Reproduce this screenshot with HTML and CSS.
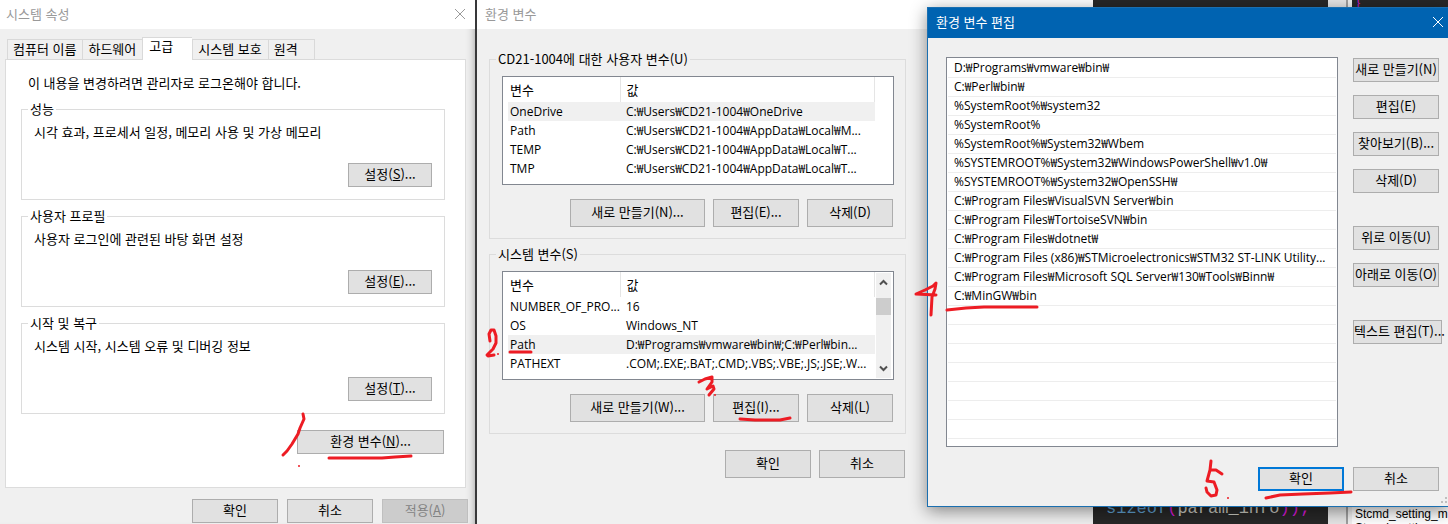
FILE: index.html
```html
<!DOCTYPE html>
<html lang="ko">

<head>
    <meta charset="UTF-8">
    <title>환경 변수 설정</title>
    <link rel="stylesheet" href="styles.css">
</head>

<body>
    <div class="desktop">
        <!-- 뒤쪽 편집기 -->
        <div class="editor">
            <div class="code">
                <code><span class="keyword">sizeof</span><span class="paren">(</span>param_info<span class="paren">));</span></code>
            </div>
            <div class="editor-scroll"></div>
            <div class="side-panel">
                <div class="side-code">}</div>
                <div class="side-list">
                    <div>Stcmd_setting_m</div>
                    <div>Stcmd_setting</div>
                </div>
            </div>
        </div>

        <!-- 시스템 속성 -->
        <section class="window system-window">
            <header class="titlebar">
                <span>시스템 속성</span>
                <button class="close" aria-label="닫기">
                    <svg width="12" height="12" viewBox="0 0 12 12"><path d="M1 1L11 11M11 1L1 11" /></svg>
                </button>
            </header>
            <div class="tabs">
                <button class="tab">컴퓨터 이름</button>
                <button class="tab">하드웨어</button>
                <button class="tab active">고급</button>
                <button class="tab">시스템 보호</button>
                <button class="tab">원격</button>
            </div>
            <div class="tab-panel">
                <p class="intro">이 내용을 변경하려면 관리자로 로그온해야 합니다.</p>
                <fieldset class="group">
                    <legend>성능</legend>
                    <p>시각 효과, 프로세서 일정, 메모리 사용 및 가상 메모리</p>
                    <button class="btn">설정(<u>S</u>)...</button>
                </fieldset>
                <fieldset class="group">
                    <legend>사용자 프로필</legend>
                    <p>사용자 로그인에 관련된 바탕 화면 설정</p>
                    <button class="btn">설정(<u>E</u>)...</button>
                </fieldset>
                <fieldset class="group">
                    <legend>시작 및 복구</legend>
                    <p>시스템 시작, 시스템 오류 및 디버깅 정보</p>
                    <button class="btn">설정(<u>T</u>)...</button>
                </fieldset>
                <button class="btn env-button">환경 변수(<u>N</u>)...</button>
            </div>
            <footer class="system-footer">
                <button class="btn">확인</button>
                <button class="btn">취소</button>
                <button class="btn" disabled>적용(<u>A</u>)</button>
            </footer>
        </section>

        <!-- 환경 변수 -->
        <section class="window env-window">
            <header class="titlebar"><span>환경 변수</span></header>
            <div class="env-body">
                <fieldset class="var-group">
                    <legend>CD21-1004에 대한 사용자 변수(U)</legend>
                    <div class="var-list">
                        <table>
                            <thead>
                                <tr><th class="name">변수</th><th>값</th></tr>
                            </thead>
                            <tbody>
                                <tr class="selected"><td>OneDrive</td><td>C:₩Users₩CD21-1004₩OneDrive</td></tr>
                                <tr><td>Path</td><td>C:₩Users₩CD21-1004₩AppData₩Local₩M...</td></tr>
                                <tr><td>TEMP</td><td>C:₩Users₩CD21-1004₩AppData₩Local₩T...</td></tr>
                                <tr><td>TMP</td><td>C:₩Users₩CD21-1004₩AppData₩Local₩T...</td></tr>
                            </tbody>
                        </table>
                    </div>
                    <div class="var-buttons">
                        <button class="btn wide">새로 만들기(N)...</button>
                        <button class="btn">편집(E)...</button>
                        <button class="btn">삭제(D)</button>
                    </div>
                </fieldset>
                <fieldset class="var-group">
                    <legend>시스템 변수(S)</legend>
                    <div class="var-list">
                        <table>
                            <thead>
                                <tr><th class="name">변수</th><th>값</th></tr>
                            </thead>
                            <tbody>
                                <tr><td>NUMBER_OF_PRO...</td><td>16</td></tr>
                                <tr><td>OS</td><td>Windows_NT</td></tr>
                                <tr class="selected"><td>Path</td><td>D:₩Programs₩vmware₩bin₩;C:₩Perl₩bin...</td></tr>
                                <tr><td>PATHEXT</td><td>.COM;.EXE;.BAT;.CMD;.VBS;.VBE;.JS;.JSE;.W...</td></tr>
                            </tbody>
                        </table>
                        <div class="scrollbar">
                            <svg width="9" height="7" viewBox="0 0 9 7"><path d="M1 5.5L4.5 2L8 5.5" /></svg>
                            <div class="thumb"></div>
                            <svg width="9" height="7" viewBox="0 0 9 7"><path d="M1 1.5L4.5 5L8 1.5" /></svg>
                        </div>
                    </div>
                    <div class="var-buttons">
                        <button class="btn wide">새로 만들기(W)...</button>
                        <button class="btn">편집(I)...</button>
                        <button class="btn">삭제(L)</button>
                    </div>
                </fieldset>
                <footer class="env-footer">
                    <button class="btn">확인</button>
                    <button class="btn">취소</button>
                </footer>
            </div>
        </section>

        <!-- 환경 변수 편집 -->
        <section class="window edit-window">
            <header class="titlebar">
                <span>환경 변수 편집</span>
                <button class="close" aria-label="닫기">
                    <svg width="12" height="12" viewBox="0 0 12 12"><path d="M1 1L11 11M11 1L1 11" /></svg>
                </button>
            </header>
            <div class="edit-body">
                <ul class="path-list">
                    <li>D:₩Programs₩vmware₩bin₩</li>
                    <li>C:₩Perl₩bin₩</li>
                    <li>%SystemRoot%₩system32</li>
                    <li>%SystemRoot%</li>
                    <li>%SystemRoot%₩System32₩Wbem</li>
                    <li>%SYSTEMROOT%₩System32₩WindowsPowerShell₩v1.0₩</li>
                    <li>%SYSTEMROOT%₩System32₩OpenSSH₩</li>
                    <li>C:₩Program Files₩VisualSVN Server₩bin</li>
                    <li>C:₩Program Files₩TortoiseSVN₩bin</li>
                    <li>C:₩Program Files₩dotnet₩</li>
                    <li>C:₩Program Files (x86)₩STMicroelectronics₩STM32 ST-LINK Utility...</li>
                    <li>C:₩Program Files₩Microsoft SQL Server₩130₩Tools₩Binn₩</li>
                    <li>C:₩MinGW₩bin</li>
                </ul>
                <div class="edit-buttons">
                    <div class="button-set">
                        <button class="btn">새로 만들기(N)</button>
                        <button class="btn">편집(E)</button>
                        <button class="btn">찾아보기(B)...</button>
                        <button class="btn">삭제(D)</button>
                    </div>
                    <div class="button-set">
                        <button class="btn">위로 이동(U)</button>
                        <button class="btn">아래로 이동(O)</button>
                    </div>
                    <div class="button-set">
                        <button class="btn text-edit">텍스트 편집(T)...</button>
                    </div>
                </div>
            </div>
            <footer class="edit-footer">
                <button class="btn default">확인</button>
                <button class="btn">취소</button>
            </footer>
            <svg class="grip" width="8" height="8" viewBox="0 0 8 8">
                <path d="M5 0h2v2h-2zM1 4h2v2h-2zM5 4h2v2h-2z" />
            </svg>
        </section>

        <!-- 순서 표시 -->
        <svg class="marks" width="1448" height="524" viewBox="0 0 1448 524">
            <path d="M303 414L304 419L300 428L298 434L292 444L287 451L283 455" />
            <path d="M329 458H382L395 457L411 456" />
            <path d="M490 341L489 334L491 330L494 330L496 336L496 343L493 349L487 355L488 356L494 355" />
            <path d="M510 352H531" />
            <path d="M699 382L705 379L712 377L712 382L707 389L713 386L714 389L709 395" />
            <path d="M740 419L755 420H780L790 418" />
            <path d="M936 295L916 294L925 290L933 286L936 283L935 289L932 297L931 315" />
            <path d="M947 310L966 308L984 307H1037" />
            <path d="M1211 461L1210 470L1207 481L1214 482L1217 490L1216 495L1211 496L1207 492L1206 488" />
            <path d="M1211 470L1216 470L1222 474" />
            <path d="M1266 498L1280 495L1303 494L1330 493L1351 492" />
            <g class="dots">
                <circle cx="299" cy="466" r="1" />
                <circle cx="498" cy="354" r="1" />
                <circle cx="715" cy="395" r="1" />
                <circle cx="1228" cy="498" r="1" />
            </g>
        </svg>
    </div>
</body>

</html>
```
FILE: styles.css
```css
* {
    box-sizing: border-box;
}

body {
    margin: 0;
    font-family: "Noto Sans CJK KR", sans-serif;
    font-size: 13px;
    line-height: 16px;
    color: #000;
    overflow: hidden;
}

p {
    margin: 0;
}

.desktop {
    position: relative;
    height: 100vh;
    overflow: hidden;
    background-color: #38383a;
}

/* 편집기 */
.editor {
    height: 100%;
    margin-left: 1093px;
    display: flex;
    background-color: #272727;
}

.code {
    flex: 0 0 235px;
    padding: 0 0 5px 13px;
    display: flex;
    align-items: flex-end;
    color: #c8c8c0;
}

.code code {
    font-family: "Liberation Mono", monospace;
    font-size: 17px;
    line-height: 20px;
}

.keyword {
    color: #5f9fcf;
}

.paren {
    color: #d619d6;
}

.editor-scroll {
    width: 20px;
    background-color: #e6e6e6;
    border-right: 2px solid #a0a0a0;
}

.side-panel {
    flex: 1;
    display: flex;
    flex-direction: column;
    justify-content: space-between;
    overflow: hidden;
    border-left: 4px solid #f0f0f0;
}

.side-code {
    padding-left: 4px;
    line-height: 6px;
    color: #d619d6;
}

.side-list {
    height: 20px;
    padding: 3px 0 0 3px;
    background-color: #fff;
    font-family: "Liberation Sans", sans-serif;
    font-size: 12px;
    line-height: 14px;
}

/* 창 공통 */
.window {
    position: absolute;
    top: 0;
    background-color: #f0f0f0;
}

.titlebar {
    height: 29px;
    padding: 0 9px 2px 8px;
    display: flex;
    align-items: center;
    justify-content: space-between;
    background-color: #fff;
    color: #999;
}

.close {
    display: flex;
    padding: 0;
    border: none;
    background: none;
    color: inherit;
}

.close path {
    fill: none;
    stroke: currentColor;
}

.btn {
    width: 86px;
    height: 24px;
    padding: 0 0 2px;
    border: 1px solid #adadad;
    background-color: #e1e1e1;
    font: inherit;
    color: #000;
    white-space: nowrap;
}

.btn:disabled {
    border-color: #bfbfbf;
    background-color: #ccc;
    color: #838383;
}

.btn.default {
    border: 2px solid #0078d7;
}

fieldset {
    margin: 0;
    min-width: 0;
    border: 1px solid #dcdcdc;
}

legend {
    padding: 0 2px;
    height: 16px;
}

/* 시스템 속성 */
.system-window {
    left: 0;
    width: 475px;
    height: 100%;
    box-shadow: inset -8px 0 8px -8px #999;
}

.system-window .titlebar {
    padding-left: 6px;
}

.tabs {
    display: flex;
    align-items: flex-end;
    height: 31px;
    padding-left: 7px;
    margin-bottom: -1px;
}

.tab {
    height: 21px;
    padding: 0 6px 2px 5px;
    border: 1px solid #d9d9d9;
    border-right: none;
    background-color: #f0f0f0;
    font: inherit;
    white-space: nowrap;
}

.tab:last-child {
    padding-right: 16px;
    border-right: 1px solid #d9d9d9;
}

.tab.active {
    position: relative;
    height: 23px;
    padding: 0 19px 6px 6px;
    border-bottom: none;
    background-color: #fff;
}

.tab-panel {
    display: flex;
    flex-direction: column;
    margin: 0 9px 0 5px;
    padding: 15px 20px 33px 15px;
    border: 1px solid #dcdcdc;
    background-color: #fff;
}

.intro {
    margin-bottom: 10px;
    padding-left: 7px;
}

.group {
    display: flex;
    flex-direction: column;
    margin-bottom: 8px;
    padding: 7px 12px 12px 6px;
}

.group p {
    margin-bottom: 23px;
    padding-left: 6px;
}

.group .btn {
    width: 84px;
    align-self: flex-end;
}

.env-button {
    width: 147px;
    margin: 8px 1px 0 0;
    align-self: flex-end;
}

.system-footer {
    display: flex;
    justify-content: flex-end;
    gap: 9px;
    padding: 11px 7px 0;
}

/* 환경 변수 */
.env-window {
    left: 477px;
    width: 616px;
    height: 100%;
}

.env-body {
    width: 429px;
    padding: 22px 0 0 12px;
}

.env-body .btn {
    height: 28px;
}

.var-group {
    margin-bottom: 7px;
    padding: 9px 11px 11px 6px;
}

.var-list {
    display: flex;
    height: 109px;
    margin-left: 6px;
    padding-left: 5px;
    border: 1px solid #828790;
    background-color: #fff;
    overflow: hidden;
}

.var-list table {
    flex: none;
    width: 367px;
    height: 101px;
    table-layout: fixed;
    border-collapse: collapse;
}

.var-list th,
.var-list td {
    height: 19px;
    padding: 0 0 0 2px;
    font-weight: normal;
    text-align: left;
    white-space: nowrap;
}

.var-list td,
.path-list {
    font-family: "Open Sans", "Noto Sans CJK KR", sans-serif;
    font-size: 12px;
}

.var-list th {
    height: 25px;
    border-right: 1px solid #e5e5e5;
}

.var-list th + th,
.var-list td + td {
    padding-left: 6px;
}

.var-list .name {
    width: 112px;
}

.selected {
    background-color: #f0f0f0;
}

.scrollbar {
    flex: none;
    width: 15px;
    margin: 1px;
    display: flex;
    flex-direction: column;
    align-items: center;
    padding: 6px 0;
    background-color: #f0f0f0;
}

.scrollbar path {
    fill: none;
    stroke: #505050;
    stroke-width: 2;
}

.thumb {
    width: 15px;
    height: 17px;
    margin: 12px 0 auto;
    background-color: #cdcdcd;
}

.var-buttons {
    display: flex;
    justify-content: flex-end;
    gap: 8px;
    margin-top: 14px;
    padding-right: 1px;
}

.btn.wide {
    width: 135px;
}

.env-footer {
    display: flex;
    justify-content: flex-end;
    gap: 8px;
    padding: 9px 1px 0 0;
}

/* 환경 변수 편집 */
.edit-window {
    top: 7px;
    left: 927px;
    right: -1px;
    border: 1px solid #1a6fb0;
    box-shadow: 0 4px 16px rgba(0, 0, 0, 0.45);
}

.edit-window .titlebar {
    height: 30px;
    padding: 0 4px 2px 8px;
    background-color: #0063b1;
    color: #fff;
}

.edit-body {
    display: flex;
    gap: 15px;
    padding: 19px 9px 0 18px;
}

.path-list {
    flex: 1;
    min-width: 0;
    height: 390px;
    margin: 0;
    padding: 1px 1px 7px;
    border: 1px solid #828790;
    list-style: none;
    background: #fff repeating-linear-gradient(#fff 0 18px, #ededed 18px 19px) content-box border-box no-repeat;
}

.path-list li {
    height: 19px;
    padding: 1px 0 0 6px;
    white-space: nowrap;
}

.edit-buttons {
    flex: none;
    width: 86px;
    padding-top: 1px;
}

.button-set {
    display: flex;
    flex-direction: column;
    gap: 13px;
    margin-bottom: 33px;
}

.btn.text-edit {
    width: 89px;
}

.edit-footer {
    display: flex;
    justify-content: flex-end;
    gap: 9px;
    padding: 20px 9px 15px;
}

.grip {
    position: absolute;
    right: 0;
    bottom: 1px;
    fill: #bfbfbf;
}

/* 빨간 펜 표시 */
.marks {
    position: absolute;
    top: 0;
    left: 0;
    pointer-events: none;
}

.marks path {
    fill: none;
    stroke: #ed1c24;
    stroke-width: 3;
    stroke-linecap: round;
    stroke-linejoin: round;
}

.dots {
    fill: #ed1c24;
}
```
